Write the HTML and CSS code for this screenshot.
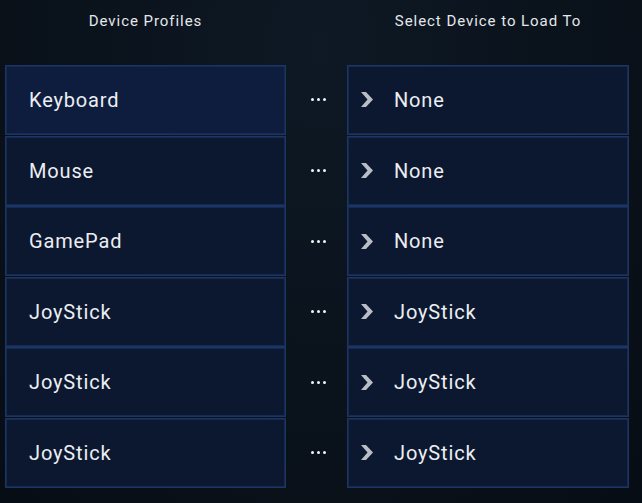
FILE: index.html
```html
<!DOCTYPE html>
<html>
<head>
<meta charset="utf-8">
<link rel="stylesheet" href="styles.css">
</head>
<body>
<div class="page">
  <div class="grid">
    <div class="head">Device Profiles</div>
    <div class="spacer"></div>
    <div class="head">Select Device to Load To</div>

    <div class="cell active"><span class="label">Keyboard</span></div>
    <div class="dots"><i></i><i></i><i></i></div>
    <div class="cell target"><svg class="chev" viewBox="0 0 12 15" width="12" height="15"><polygon points="0,0 5,0 12,7.5 5,15 0,15 6.5,7.5"/></svg><span class="label">None</span></div>

    <div class="cell"><span class="label">Mouse</span></div>
    <div class="dots"><i></i><i></i><i></i></div>
    <div class="cell target"><svg class="chev" viewBox="0 0 12 15" width="12" height="15"><polygon points="0,0 5,0 12,7.5 5,15 0,15 6.5,7.5"/></svg><span class="label">None</span></div>

    <div class="cell"><span class="label">GamePad</span></div>
    <div class="dots"><i></i><i></i><i></i></div>
    <div class="cell target"><svg class="chev" viewBox="0 0 12 15" width="12" height="15"><polygon points="0,0 5,0 12,7.5 5,15 0,15 6.5,7.5"/></svg><span class="label">None</span></div>

    <div class="cell"><span class="label">JoyStick</span></div>
    <div class="dots"><i></i><i></i><i></i></div>
    <div class="cell target"><svg class="chev" viewBox="0 0 12 15" width="12" height="15"><polygon points="0,0 5,0 12,7.5 5,15 0,15 6.5,7.5"/></svg><span class="label">JoyStick</span></div>

    <div class="cell"><span class="label">JoyStick</span></div>
    <div class="dots"><i></i><i></i><i></i></div>
    <div class="cell target"><svg class="chev" viewBox="0 0 12 15" width="12" height="15"><polygon points="0,0 5,0 12,7.5 5,15 0,15 6.5,7.5"/></svg><span class="label">JoyStick</span></div>

    <div class="cell"><span class="label">JoyStick</span></div>
    <div class="dots"><i></i><i></i><i></i></div>
    <div class="cell target"><svg class="chev" viewBox="0 0 12 15" width="12" height="15"><polygon points="0,0 5,0 12,7.5 5,15 0,15 6.5,7.5"/></svg><span class="label">JoyStick</span></div>
  </div>
</div>
</body>
</html>
```
FILE: styles.css
```css
html, body {
  margin: 0;
  padding: 0;
  height: 100%;
}
body {
  background: radial-gradient(ellipse at 50% 10%, #0e1925 0%, #0a121b 55%, #070d14 100%);
  font-family: Roboto, "DejaVu Sans", sans-serif;
  color: #e8eaee;
}
.page {
  width: 642px;
  height: 503px;
  overflow: hidden;
}
.grid {
  display: grid;
  grid-template-columns: 281px 61px 282px;
  grid-template-rows: 64.4px repeat(6, 70px);
  row-gap: 0.6px;
  padding-left: 5px;
}
.head {
  font-size: 15px;
  letter-spacing: 0.95px;
  color: #e4e7eb;
  text-align: center;
  padding-top: 12px;
  line-height: 18px;
}
.cell {
  box-sizing: border-box;
  height: 70px;
  border: 1px solid #1c3563;
  background: #0b1830;
  box-shadow: 0 0 0 1px #142a52 inset;
  display: flex;
  align-items: center;
  padding-left: 23px;
}
.cell.active {
  background: #0e1d3d;
}
.cell.target {
  padding-left: 13px;
}
.label {
  font-size: 20px;
  letter-spacing: 0.85px;
  color: #eceef2;
}
.chev {
  fill: #b8bdc6;
  margin-right: 21px;
  flex: none;
}
.dots {
  display: flex;
  align-items: center;
  justify-content: center;
  gap: 3px;
  padding-left: 3px;
}
.dots i {
  width: 3px;
  height: 3px;
  border-radius: 50%;
  background: #f2f4f7;
}
```
